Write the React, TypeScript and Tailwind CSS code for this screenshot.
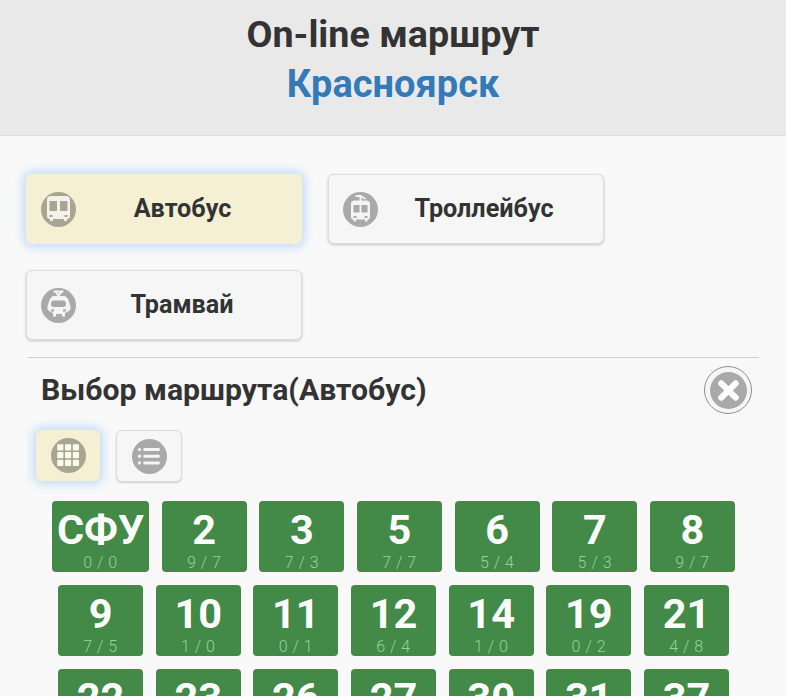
const rows: [string, string][] = [
  ["СФУ", "0 / 0"], ["2", "9 / 7"], ["3", "7 / 3"], ["5", "7 / 7"], ["6", "5 / 4"], ["7", "5 / 3"], ["8", "9 / 7"],
  ["9", "7 / 5"], ["10", "1 / 0"], ["11", "0 / 1"], ["12", "6 / 4"], ["14", "1 / 0"], ["19", "0 / 2"], ["21", "4 / 8"],
  ["22", "3 / 3"], ["23", "2 / 4"], ["26", "4 / 3"], ["27", "2 / 3"], ["30", "3 / 1"], ["31", "2 / 2"], ["37", "5 / 6"],
];

function Bus({ fill }: { fill: string }) {
  return (
    <svg viewBox="0 0 35 35" className="w-[35px] h-[35px] shrink-0">
      <circle cx="17.5" cy="17.5" r="17.5" fill={fill} />
      <path fillRule="evenodd" fill="#f4f2ea" d="M6 8q0-4 4-4h15q4 0 4 4v16q0 3-3 3v2h-3v-2h-11v2h-3v-2q-3 0-3-3zM8.500 9v10h7.500v-10zM19 9v10h7.500v-10zM8.500 23v2h3v-2zM23.500 23v2h3v-2z" />
    </svg>
  );
}
function Trolley() {
  return (
    <svg viewBox="0 0 35 35" className="w-[35px] h-[35px] shrink-0">
      <circle cx="17.5" cy="17.5" r="17.5" fill="#a9a9a9" />
      <path stroke="#f4f4f4" strokeWidth="2" fill="none" d="M12.500 4h5l5 3M17.500 4v5" />
      <path fillRule="evenodd" fill="#f4f4f4" d="M8 12q0-3.500 3.500-3.500h12q3.500 0 3.500 3.500v13q0 2.500-2.500 2.500v2h-2.500v-2h-9v2h-2.500v-2q-2.500 0-2.500-2.500zM10.500 13v7.500h6v-7.500zM18.500 13v7.500h6v-7.500zM10.500 24v2h3v-2zM21.500 24v2h3v-2z" />
    </svg>
  );
}
function Tram() {
  return (
    <svg viewBox="0 0 35 35" className="w-[35px] h-[35px] shrink-0">
      <circle cx="17.5" cy="17.5" r="17.5" fill="#a9a9a9" />
      <path stroke="#f4f4f4" strokeWidth="2" fill="none" d="M12.500 3.500h10M14.500 3.500l3 4 3-4" />
      <path fillRule="evenodd" fill="#f4f4f4" d="M11.500 8h12q3.500 1.500 4.500 5.500l1.500 5q.8 3.500-2.500 5l-3 1.500v3.500h-3v-2.500h-6v2.500h-3v-3.500l-3-1.500q-3.300-1.500-2.500-5l1.500-5q1-4 4-5.500zM13 12.500q-3 0-3 3.300t3 3.200h9q3 0 3-3.200t-3-3.300zM10 21.500v2h3v-2zM22 21.500v2h3v-2z" />
    </svg>
  );
}
function Grid({ fill }: { fill: string }) {
  const cells = [0, 1, 2].flatMap((r) => [0, 1, 2].map((c) => [c, r]));
  return (
    <svg viewBox="0 0 35 35" className="w-[35px] h-[35px]">
      <circle cx="17.5" cy="17.5" r="17.5" fill={fill} />
      {cells.map(([c, r]) => (
        <rect key={`${c}-${r}`} x={6.200 + c * 7.800} y={6.200 + r * 7.800} width="6.200" height="6.200" rx="0.800" fill="#fbf8ec" />
      ))}
    </svg>
  );
}
function List() {
  return (
    <svg viewBox="0 0 35 35" className="w-[35px] h-[35px]">
      <circle cx="17.5" cy="17.5" r="17.5" fill="#a9a9a9" />
      {[10.500, 17.200, 23.900].map((y) => (
        <g key={y} fill="#f6f6f6">
          <circle cx="7.500" cy={y} r="1.600" />
          <rect x="11.300" y={y - 1.500} width="16.500" height="3" rx="1" />
        </g>
      ))}
    </svg>
  );
}

function ModeButton({ label, icon, active }: { label: string; icon: React.ReactNode; active?: boolean }) {
  return (
    <div
      className={
        "flex items-center w-[276px] h-[70px] rounded-[6px] pr-[15px] " +
        (active
          ? "pl-[15px] bg-[#f5efd4] shadow-[0_0_10px_3px_rgba(120,185,250,0.45)]"
          : "pl-[14px] bg-[#f6f6f6] border border-[#dddddd] shadow-[0_1px_3px_rgba(0,0,0,0.22)]")
      }
    >
      {icon}
      <div className="flex-1 text-center text-[25.200px] font-bold text-[#333333] pl-[2px]">{label}</div>
    </div>
  );
}

export default function App() {
  return (
    <div className="h-[696px] overflow-hidden bg-[#f9f9f9] font-['Roboto',sans-serif]">
      <header className="h-[136px] bg-[#e9e9e9] border-b border-[#dddddd] flex flex-col items-center pt-[11px]">
        <div className="text-[37.700px] leading-[47px] font-bold text-[#333333]">On-line маршрут</div>
        <div className="text-[38px] leading-[52px] font-bold text-[#337ab7]">Красноярск</div>
      </header>
      <div className="px-[26px] pt-[38px]">
        <div className="flex flex-wrap gap-x-[26px] gap-y-[26px]">
          <ModeButton label="Автобус" icon={<Bus fill="#a8a593" />} active />
          <ModeButton label="Троллейбус" icon={<Trolley />} />
          <ModeButton label="Трамвай" icon={<Tram />} />
        </div>
      </div>
      <div className="ml-[28px] mr-[27px] mt-[17px] border-t border-[#cfcfcf] pt-[7px]">
        <div className="flex items-center justify-between pl-[13px] pr-[7px] h-[50px]">
          <div className="text-[30.200px] font-bold text-[#333333]">Выбор маршрута(Автобус)</div>
          <div className="w-[48px] h-[48px] rounded-full border-[1.500px] border-[#8f8f8f] bg-[#f6f6f6] flex items-center justify-center">
            <svg viewBox="0 0 36 36" className="w-[37px] h-[37px]">
              <circle cx="18" cy="18" r="18" fill="#a9a9a9" />
              <path d="M11 11l14 14M25 11l-14 14" stroke="#fff" strokeWidth="6" strokeLinecap="round" />
            </svg>
          </div>
        </div>
        <div className="flex gap-[16px] pl-[8px] mt-[15px]">
          <div className="w-[64px] h-[51px] rounded-[6px] bg-[#f5efd4] shadow-[0_0_10px_3px_rgba(120,185,250,0.45)] flex items-center justify-center">
            <Grid fill="#a8a593" />
          </div>
          <div className="w-[66px] h-[52px] rounded-[6px] bg-[#f6f6f6] border border-[#dddddd] shadow-[0_1px_2px_rgba(0,0,0,0.18)] flex items-center justify-center">
            <List />
          </div>
        </div>
        <div className="flex flex-wrap justify-center gap-x-[12.670px] gap-y-[13px] mt-[19px]">
          {rows.map(([n, c]) => (
            <div
              key={n}
              className={
                "h-[71px] rounded-[4px] bg-[#438947] flex flex-col items-center text-white " +
                (n === "СФУ" ? "w-[97px]" : "w-[85px]")
              }
            >
              <div className="text-[41.500px] leading-[44px] font-bold mt-[7px] whitespace-nowrap">{n}</div>
              <div className="text-[16px] leading-[18px] tracking-[0.5px] font-light text-[#9ad09d] mt-[2px] whitespace-pre">{c}</div>
            </div>
          ))}
        </div>
      </div>
    </div>
  );
}
